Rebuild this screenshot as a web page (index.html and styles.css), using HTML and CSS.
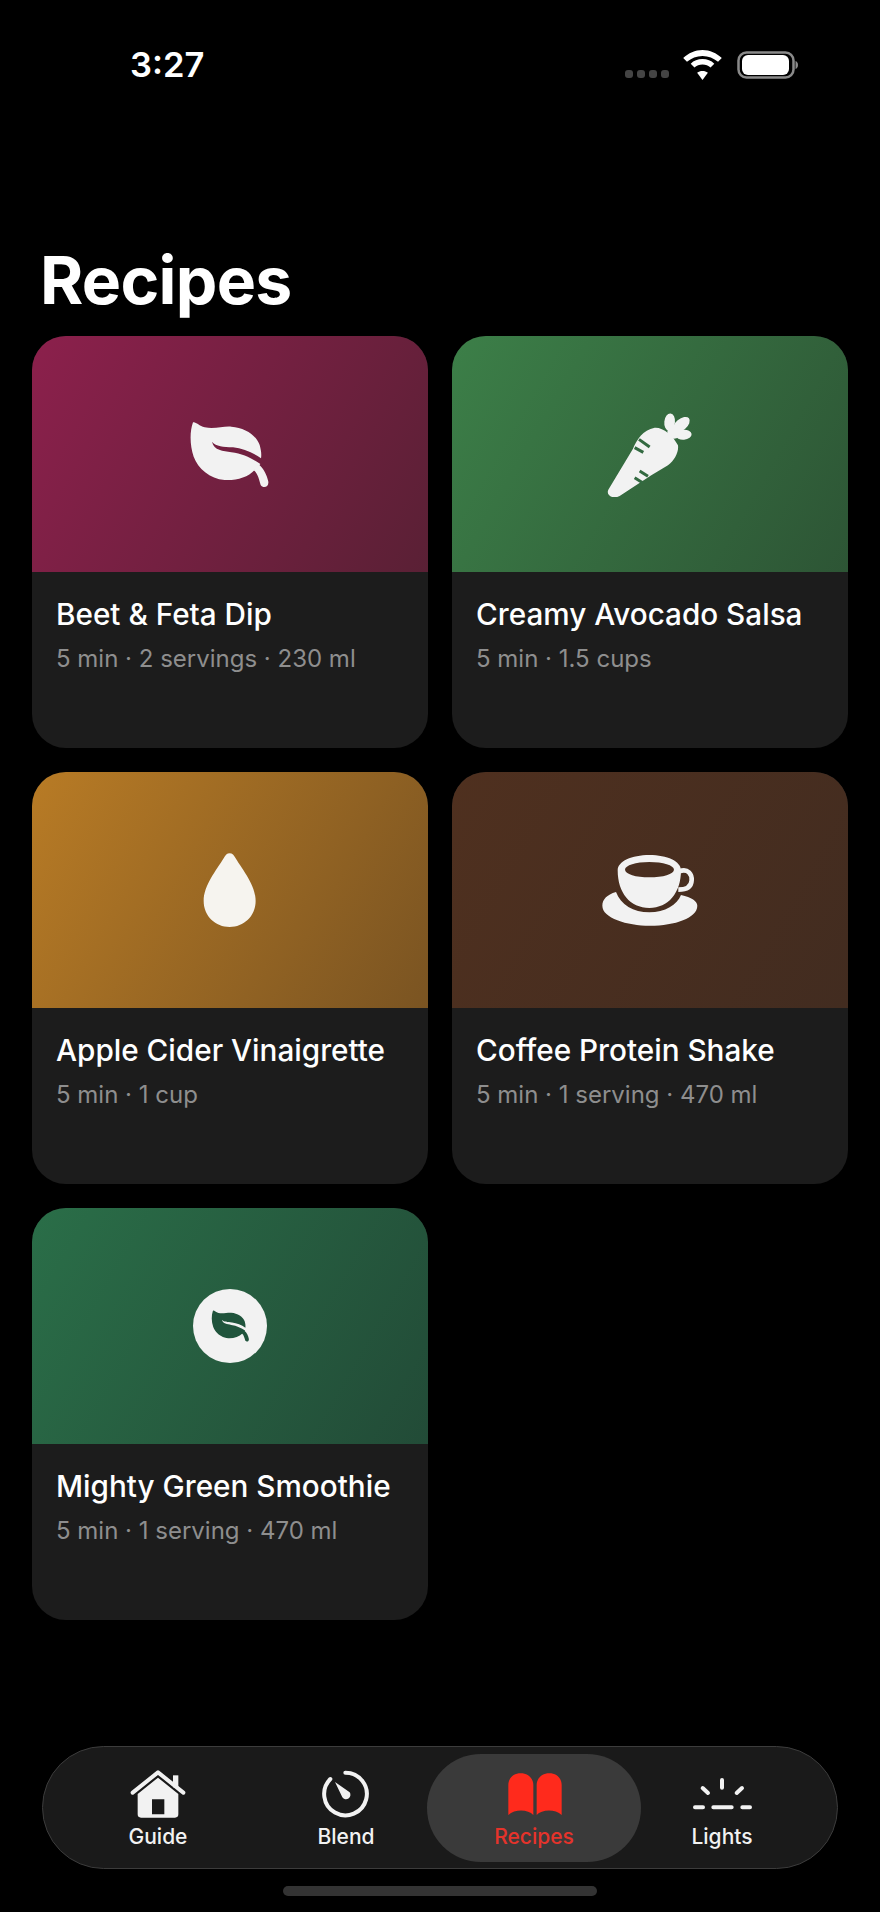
FILE: index.html
```html
<!DOCTYPE html>
<html lang="en">
<head>
<meta charset="utf-8">
<title>Recipes</title>
<link rel="stylesheet" href="styles.css">
</head>
<body>
<svg class="defs" width="0" height="0" aria-hidden="true">
  <symbol id="leaf" viewBox="88 87 245 210">
    <path fill-rule="evenodd" d="M100 97C108 94 118 108 135 112C165 118 190 108 215 110C255 113 290 135 300 165C304 180 306 192 304 205C280 188 250 175 220 172C190 170 170 170 157 155C163 182 190 182 215 187C250 191 280 207 302 222C298 228 292 234 285 240C265 262 230 272 195 270C150 266 115 235 102 200C90 165 90 125 100 97Z"/>
    <path d="M282 241C295 250 298 270 303 285C310 296 328 292 326 275C322 255 312 235 298 224Z"/>
  </symbol>
</svg>
<div class="page">
  <header class="status">
    <span class="time">3:27</span>
    <div class="status-icons">
      <div class="signal"><i></i><i></i><i></i><i></i></div>
      <svg class="wifi" viewBox="2 0 36 28"><path d="M20 5C27 5 33 8 38 12.500L34.500 16C30.500 12.500 25.500 10.500 20 10.500C14.500 10.500 9.500 12.500 5.500 16L2 12.500C7 8 13 5 20 5Z" transform="translate(0 -5)"/><path d="M20 12.500C24.500 12.500 28 14 31 16.800L27.500 20.300C25.500 18.500 23 17.500 20 17.500C17 17.500 14.500 18.500 12.500 20.300L9 16.800C12 14 15.500 12.500 20 12.500Z" transform="translate(0 -4)"/><path d="M20 19.500C22 19.500 23.500 20 25 21.300L20 28L15 21.300C16.500 20 18 19.500 20 19.500Z"/></svg>
      <svg class="battery" viewBox="0 0 61 28"><rect x="1.500" y="1.500" width="55" height="25" rx="8" fill="none" stroke="#8a8a8a" stroke-width="2.500"/><rect x="5" y="4" width="47" height="20" rx="6" fill="#fff"/><path d="M58.500 10C60 10.500 61 12 61 14C61 16 60 17.500 58.500 18Z" fill="#8a8a8a"/></svg>
    </div>
  </header>

  <h1 class="heading">Recipes</h1>

  <main class="grid">
    <article class="card">
      <div class="thumb thumb-beet">
        <svg class="icon-leaf"><use href="#leaf"/></svg>
      </div>
      <div class="info">
        <h2 class="name">Beet &amp; Feta Dip</h2>
        <p class="meta">5 min · 2 servings · 230 ml</p>
      </div>
    </article>
    <article class="card">
      <div class="thumb thumb-avocado">
        <svg class="icon-carrot" viewBox="70 62 280 260">
          <ellipse cx="270" cy="95" rx="16" ry="26" transform="rotate(6 270 95)"/>
          <ellipse cx="305" cy="103" rx="17" ry="30" transform="rotate(50 305 103)"/>
          <ellipse cx="312" cy="133" rx="24" ry="15" transform="rotate(-5 312 133)"/>
          <circle cx="283" cy="125" r="20"/>
          <path d="M86 298L160 175C170 150 190 118 225 112C250 110 280 135 295 165C298 185 285 210 265 225L215 255L120 317C100 328 78 315 86 298Z"/>
          <path class="slot" d="M178 147L210 170M165 172L191 186M205 258L180 242M190 278L165 262"/>
        </svg>
      </div>
      <div class="info">
        <h2 class="name">Creamy Avocado Salsa</h2>
        <p class="meta">5 min · 1.5 cups</p>
      </div>
    </article>
    <article class="card">
      <div class="thumb thumb-cider">
        <svg class="icon-drop" viewBox="70 68 160 224"><path d="M150 69C158 69 163 75 168 84C190 120 228 165 228 212C228 258 192 290 150 290C108 290 72 258 72 212C72 165 110 120 132 84C137 75 142 69 150 69Z"/></svg>
      </div>
      <div class="info">
        <h2 class="name">Apple Cider Vinaigrette</h2>
        <p class="meta">5 min · 1 cup</p>
      </div>
    </article>
    <article class="card">
      <div class="thumb thumb-coffee">
        <svg class="icon-cup" viewBox="60 70 300 220">
          <path fill-rule="evenodd" d="M113 122C113 95 155 76 208 76C262 76 303 95 303 122C303 190 265 235 208 235C150 235 113 190 113 122ZM135 120C135 133 168 143 208 143C249 143 282 133 282 120C282 107 249 97 208 97C168 97 135 107 135 120Z"/>
          <path class="cup-handle" d="M298 125C325 115 336 135 335 152C334 172 318 180 295 180"/>
          <path d="M108 187C80 195 67 210 67 228C67 265 140 288 210 288C285 288 352 265 352 228C352 215 335 203 303 196C292 225 255 248 208 248C160 248 122 225 108 187Z"/>
        </svg>
      </div>
      <div class="info">
        <h2 class="name">Coffee Protein Shake</h2>
        <p class="meta">5 min · 1 serving · 470 ml</p>
      </div>
    </article>
    <article class="card">
      <div class="thumb thumb-green">
        <div class="badge"><svg class="icon-leaf-small"><use href="#leaf"/></svg></div>
      </div>
      <div class="info">
        <h2 class="name">Mighty Green Smoothie</h2>
        <p class="meta">5 min · 1 serving · 470 ml</p>
      </div>
    </article>
  </main>

  <nav class="tabbar">
    <a class="tab">
      <svg class="tab-icon" viewBox="291 114 180 162">
        <path class="tab-line" d="M305 188L381 127L457 188"/>
        <rect x="426" y="136" width="16" height="36"/>
        <path fill-rule="evenodd" d="M320 192L381 143L442 192V253Q442 263 432 263H330Q320 263 320 253ZM363 208V253H400V208Z"/>
      </svg>
      <span class="tab-label">Guide</span>
    </a>
    <a class="tab">
      <svg class="tab-icon" viewBox="858 114 180 162">
        <path class="tab-line" d="M946 128A64 64 0 1 1 901 147"/>
        <path d="M915 156L959 187A13 13 0 0 1 937 202Z"/>
      </svg>
      <span class="tab-label">Blend</span>
    </a>
    <a class="tab tab-active">
      <svg class="tab-icon" viewBox="252 114 180 162">
        <path d="M265 255V165C265 145 280 130 302 130C324 130 340 145 340 165V255C325 238 285 236 265 255Z"/>
        <path d="M425 255V165C425 145 410 130 388 130C366 130 350 145 350 165V255C365 238 405 236 425 255Z"/>
      </svg>
      <span class="tab-label">Recipes</span>
    </a>
    <a class="tab">
      <svg class="tab-icon" viewBox="816 114 180 162">
        <path class="tab-line" d="M906 150V173M848 174L864 189M966 174L950 189M825 232H849M880 232H935M967 232H990"/>
      </svg>
      <span class="tab-label">Lights</span>
    </a>
  </nav>
  <div class="home-bar"></div>
</div>
</body>
</html>
```
FILE: styles.css
```css
* { box-sizing: border-box; }
html, body { margin: 0; padding: 0; background: #000; }
body { font-family: Inter, "Liberation Sans", sans-serif; color: #fff; }
.defs { position: absolute; }
.page { height: 1912px; display: flex; flex-direction: column; overflow: hidden; }

.status { display: flex; justify-content: space-between; align-items: center; padding: 50px 82px 0 130px; height: 80px; margin-bottom: 160px; }
.time { font-size: 34.500px; line-height: 30px; font-weight: 600; }
.status-icons { display: flex; align-items: flex-end; height: 30px; }
.signal { display: flex; gap: 4px; margin: 0 14px 2px 0; }
.signal i { width: 8px; height: 8px; border-radius: 3px; background: #444; }
.wifi { width: 39px; height: 30px; fill: #fff; margin-right: 15px; }
.battery { width: 61px; height: 28px; margin-bottom: 1px; }

.heading { margin: 0 0 16px; padding-left: 40px; font-size: 66px; line-height: 80px; font-weight: 700; letter-spacing: -0.7px; }

.grid { display: grid; grid-template-columns: 396px 396px; gap: 24px; padding: 0 32px; }
.card { height: 412px; border-radius: 34px; overflow: hidden; background: #1c1c1c; }
.thumb { height: 236px; display: flex; align-items: center; justify-content: center; }
.thumb svg { fill: #f2f2f2; }
.thumb-beet { background: linear-gradient(120deg, #8c204c, #5a2035); }
.thumb-avocado { background: linear-gradient(120deg, #3c7f48, #2d5535); }
.thumb-cider { background: linear-gradient(120deg, #b87b25, #7a5422); }
.thumb-coffee { background: linear-gradient(120deg, #4f301f, #422c20); }
.thumb-green { background: linear-gradient(120deg, #2a6e48, #224b37); }

.icon-leaf { width: 81.7px; height: 70px; }
.icon-carrot { width: 93.3px; height: 86.7px; }
.slot { fill: none; stroke: #336a41; stroke-width: 9; stroke-linecap: butt; }
.icon-drop { width: 53.3px; height: 74.7px; }
.thumb .icon-drop { fill: #f6f4ef; }
.icon-cup { width: 100px; height: 73.3px; }
.cup-handle { fill: none; stroke: #f2f2f2; stroke-width: 14; }
.badge { width: 74px; height: 74px; border-radius: 50%; background: #f2f2f2; display: flex; align-items: center; justify-content: center; }
.thumb .icon-leaf-small { width: 39px; height: 33.500px; fill: #20543c; }

.info { padding: 24px 24px 0; }
.name { margin: 0; font-size: 29.700px; line-height: 36px; font-weight: 550; white-space: nowrap; }
.meta { margin: 12px 0 0; font-size: 24px; line-height: 30px; font-weight: 400; color: #8e8e8e; white-space: nowrap; }

.tabbar { margin: auto 42px 0; height: 123px; display: grid; grid-template-columns: repeat(4, 188px); padding: 21px 21px 0; background: #1a1a1a; border: 1px solid #3c3c3c; border-radius: 62px; }
.tab { position: relative; display: flex; flex-direction: column; align-items: center; color: #f2f2f2; }
.tab-icon { position: relative; width: 60px; height: 54px; fill: #f2f2f2; }
.tab-line { fill: none; stroke: #f2f2f2; stroke-width: 12; stroke-linecap: round; stroke-linejoin: round; }
.tab-label { position: relative; font-size: 21px; line-height: 30px; font-weight: 500; }
.tab-active::before { content: ""; position: absolute; left: -13px; right: -13px; top: -14px; height: 108px; border-radius: 54px; background: #3a3a3a; }
.tab-active .tab-icon { fill: #ff2a1c; }
.tab-active .tab-label { color: #e5332b; }
.home-bar { width: 314px; height: 10px; margin: 17px auto 16px; border-radius: 5px; background: #333; flex: none; }
```
